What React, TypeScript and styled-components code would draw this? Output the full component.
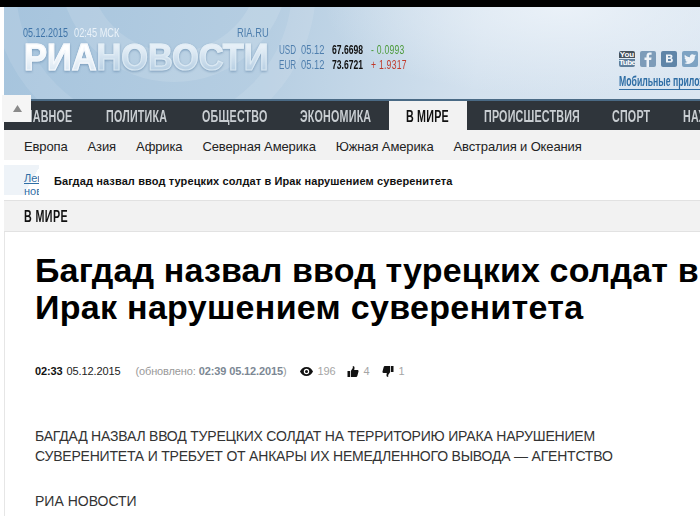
import React from 'react';
import styled, { createGlobalStyle } from 'styled-components';

const GlobalStyle = createGlobalStyle`
  html, body {
    margin: 0;
    padding: 0;
    background: #fff;
    overflow: hidden;
  }
  #root {
    width: 700px;
    height: 516px;
    overflow: hidden;
  }
`;

const arial = `"Liberation Sans", Arial, sans-serif`;

const Page = styled.div`
  position: relative;
  width: 700px;
  height: 516px;
  overflow: hidden;
  background: #fff;
  font-family: ${arial};
`;

const TopBar = styled.div`
  height: 7px;
  background: #000;
`;

const Body = styled.div`
  margin-left: 4px;
  width: 696px;
  overflow: hidden;
`;

const Header = styled.header`
  position: relative;
  height: 92px;
  overflow: hidden;
  background:
    radial-gradient(ellipse 240px 90px at 560px 0, #eaf1f8 0%, rgba(234, 241, 248, 0) 100%),
    linear-gradient(100deg, #a6c4dd 0%, #b6cee2 38%, #d3e1ee 68%, #dbe6f1 100%);
`;

const Swirl = styled.svg`
  position: absolute;
  left: 0;
  top: 0;
`;

/* no condensed face is installed, so narrow text is squeezed horizontally */
const Narrow = styled.span<{ $x?: number }>`
  display: inline-block;
  white-space: nowrap;
  transform: scaleX(${({ $x }) => $x ?? 0.66});
  transform-origin: left center;
`;

const DateLine = styled.div`
  position: absolute;
  left: 19px;
  top: 18px;
  display: flex;
  gap: 6px;
  font: 13px/15px ${arial};
`;

const DatePart = styled.span`
  width: 45px;
  color: #3f74a8;
`;

const TimePart = styled.span`
  color: #eaf2f9;
`;

const RiaLabel = styled.div`
  position: absolute;
  left: 233px;
  top: 18px;
  font: 13px/15px ${arial};
  color: #4f7fae;
`;

const Logo = styled.div`
  position: absolute;
  left: 20px;
  top: 38px;
  font: bold 36px/26px ${arial};
  white-space: nowrap;
  transform-origin: left top;
  transform: scaleX(0.955);
  filter: drop-shadow(0 1px 1px rgba(70, 110, 150, 0.5));
`;

const LogoBright = styled.span`
  background: linear-gradient(#ffffff 30%, #dbe8f3 80%);
  -webkit-background-clip: text;
  background-clip: text;
  color: transparent;
  -webkit-text-stroke: 1.2px #f4f8fc;
`;

const LogoFaded = styled.span`
  background: linear-gradient(#e6eff7 25%, #b4cde2 85%);
  -webkit-background-clip: text;
  background-clip: text;
  color: transparent;
  -webkit-text-stroke: 1.2px rgba(226, 237, 246, 0.75);
`;

const Rates = styled.div`
  position: absolute;
  left: 275px;
  top: 36px;
  display: grid;
  grid-template-columns: 22px 31px 39px auto;
  row-gap: 1px;
  font: 13px/14px ${arial};
  color: #4f7fae;
`;

const RateValue = styled.span`
  color: #111;
  font-weight: bold;
`;

const RateDelta = styled.span<{ $up?: boolean }>`
  color: ${({ $up }) => ($up ? '#c0392b' : '#4c9a3a')};
  letter-spacing: 0.4px;
`;

const Social = styled.div`
  position: absolute;
  left: 615px;
  top: 44px;
  display: flex;
  gap: 5px;
`;

const SocialIcon = styled.div<{ $tone: string }>`
  width: 16px;
  height: 16px;
  border-radius: 2px;
  background: ${({ $tone }) => $tone};
  display: flex;
  align-items: center;
  justify-content: center;
  overflow: hidden;
`;

const YouTubeBadge = styled.div`
  width: 16px;
  height: 16px;
  display: flex;
  flex-direction: column;
  gap: 1px;
  overflow: hidden;
`;

const YouPart = styled.div`
  height: 7px;
  font: bold 8px/7px ${arial};
  text-align: center;
  color: #fff;
  background: #46525c;
  border-radius: 2px 2px 0 0;
`;

const TubePart = styled.div`
  height: 8px;
  font: bold 8px/8px ${arial};
  text-align: center;
  color: #fff;
  background: #5f7f9c;
  border-radius: 0 0 2px 2px;
  letter-spacing: -0.5px;
`;

const MobileLink = styled.a`
  position: absolute;
  left: 615px;
  top: 67px;
  font: bold 14px/15px ${arial};
  color: #2f6ea5;
  border-bottom: 1px solid #2f6ea5;
  width: 120px;
`;

const MainNav = styled.nav`
  display: flex;
  height: 29px;
  background: #2f353b;
  border-top: 2px solid #4a6a85;
  overflow: hidden;
`;

const NavItem = styled.a<{ $active?: boolean; $width: number }>`
  flex: none;
  width: ${({ $width }) => $width}px;
  height: 29px;
  box-sizing: border-box;
  padding-left: 17px;
  font: bold 16px/31px ${arial};
  letter-spacing: 0.3px;
  color: ${({ $active }) => ($active ? '#111' : '#c9ced2')};
  background: ${({ $active }) => ($active ? '#f2f2f2' : 'transparent')};

  &:first-child {
    padding-left: 15px;
  }
`;

const SubNav = styled.div`
  display: flex;
  gap: 20px;
  height: 30px;
  padding-left: 20px;
  background: #f2f2f2;
  font: 13px/33px ${arial};
  letter-spacing: -0.13px;
  color: #222;
`;

const Ticker = styled.div`
  display: flex;
  align-items: flex-start;
  height: 30px;
  margin-top: 5px;
`;

const TickerTab = styled.div`
  width: 35px;
  height: 30px;
  overflow: hidden;
  padding: 7px 0 0 20px;
  box-sizing: border-box;
  background: linear-gradient(120deg, #eef3f8 0 70%, #fff 70%);
  font: 11px/13px ${arial};
  color: #2f6ea5;
  text-decoration: underline;
`;

const TickerText = styled.div`
  margin-left: 15px;
  font: bold 11px/32px ${arial};
  letter-spacing: 0.12px;
  color: #111;
  white-space: nowrap;
`;

const Section = styled.div`
  height: 32px;
  margin-top: 5px;
  box-sizing: border-box;
  padding-left: 20px;
  background: #f2f2f2;
  border-top: 1px solid #e2e2e2;
  border-bottom: 1px solid #e2e2e2;
  font: bold 16px/31px ${arial};
  letter-spacing: 0.6px;
  color: #111;
`;

const Article = styled.article`
  box-sizing: border-box;
  border-left: 1px solid #e6e6e6;
  padding: 20px 0 0 30px;
  height: 300px;
`;

const Title = styled.h1`
  margin: 0;
  font: bold 34px/37px ${arial};
  color: #000;
  white-space: nowrap;
`;

const TitleLine = styled.span<{ $spacing: number }>`
  display: block;
  letter-spacing: ${({ $spacing }) => $spacing}px;
`;

const Meta = styled.div`
  display: flex;
  align-items: center;
  margin-top: 37px;
  height: 16px;
  font: 11px/16px ${arial};
  letter-spacing: -0.12px;
  color: #222;
  white-space: nowrap;
`;

const MetaTime = styled.b`
  color: #111;
  margin-right: 4px;
`;

const Updated = styled.span`
  margin-left: 15px;
  color: #999;
`;

const UpdatedBold = styled.b`
  color: #7c8894;
`;

const Stat = styled.span<{ $gap: number }>`
  display: inline-flex;
  align-items: center;
  margin-left: ${({ $gap }) => $gap}px;
  color: #a5a5a5;
  gap: 5px;
`;

const Lead = styled.p`
  margin: 47px 0 0;
  width: 640px;
  font: 14px/20px ${arial};
  letter-spacing: -0.2px;
  color: #333;
`;

const Source = styled.p`
  margin: 25px 0 0;
  font: 14px/20px ${arial};
  color: #333;
`;

const ScrollTop = styled.button`
  position: absolute;
  left: 2px;
  top: 95px;
  width: 29px;
  height: 27px;
  padding: 0 0 0 1px;
  border: 0;
  background: #f5f5f5;
  display: flex;
  align-items: center;
  justify-content: center;
`;

const navItems = [
  { label: 'ГЛАВНОЕ', width: 85 },
  { label: 'ПОЛИТИКА', width: 96 },
  { label: 'ОБЩЕСТВО', width: 98 },
  { label: 'ЭКОНОМИКА', width: 106 },
  { label: 'В МИРЕ', width: 78, active: true },
  { label: 'ПРОИСШЕСТВИЯ', width: 128 },
  { label: 'СПОРТ', width: 71 },
  { label: 'НАУКА', width: 70 },
];
const regions = ['Европа', 'Азия', 'Африка', 'Северная Америка', 'Южная Америка', 'Австралия и Океания'];

export default function App() {
  return (
    <Page>
      <GlobalStyle />
      <TopBar />
      <Body>
        <Header>
          <Swirl width="696" height="92" viewBox="0 0 696 92">
            <circle cx="170" cy="-40" r="100" fill="none" stroke="#fff" strokeOpacity="0.12" strokeWidth="30" />
            <circle cx="150" cy="-20" r="150" fill="none" stroke="#fff" strokeOpacity="0.1" strokeWidth="24" />
          </Swirl>
          <DateLine>
            <DatePart>
              <Narrow $x={0.69}>05.12.2015</Narrow>
            </DatePart>
            <TimePart>
              <Narrow $x={0.71}>02:45 МСК</Narrow>
            </TimePart>
          </DateLine>
          <RiaLabel>
            <Narrow $x={0.72}>RIA.RU</Narrow>
          </RiaLabel>
          <Logo>
            <LogoBright>РИА</LogoBright>
            <LogoFaded>НОВОСТИ</LogoFaded>
          </Logo>
          <Rates>
            <Narrow $x={0.62}>USD</Narrow>
            <Narrow $x={0.72}>05.12</Narrow>
            <RateValue>
              <Narrow>67.6698</Narrow>
            </RateValue>
            <RateDelta>
              <Narrow>- 0.0993</Narrow>
            </RateDelta>
            <Narrow $x={0.62}>EUR</Narrow>
            <Narrow $x={0.72}>05.12</Narrow>
            <RateValue>
              <Narrow>73.6721</Narrow>
            </RateValue>
            <RateDelta $up>
              <Narrow>+ 1.9317</Narrow>
            </RateDelta>
          </Rates>
          <Social>
            <YouTubeBadge>
              <YouPart>You</YouPart>
              <TubePart>Tube</TubePart>
            </YouTubeBadge>
            <SocialIcon $tone="#7d9cb9">
              <svg width="16" height="16" viewBox="0 0 16 16">
                <path d="M9 16V9h2.2l.4-2.6H9V5c0-.8.3-1.2 1.2-1.2h1.4V1.600C11.200 1.500 10.500 1.500 9.800 1.500 7.800 1.500 6.500 2.700 6.500 4.800v1.600H4.500V9h2v7z" fill="#eef3f8" />
              </svg>
            </SocialIcon>
            <SocialIcon $tone="#5f85a8">
              <svg width="16" height="16" viewBox="0 0 16 16">
                <path d="M5 3.500h4.200c1.500 0 2.300.8 2.300 2 0 .8-.4 1.400-1.100 1.700.9.300 1.500 1 1.500 2 0 1.500-1.100 2.300-2.700 2.300H5zm2 1.600v1.500h1.800c.5 0 .8-.3.8-.8s-.3-.7-.8-.7zm0 3v2h2c.6 0 1-.4 1-1s-.4-1-1-1z" fill="#eef3f8" />
              </svg>
            </SocialIcon>
            <SocialIcon $tone="#7ea3c3">
              <svg width="16" height="16" viewBox="0 0 24 24">
                <path d="M21 6.500c-.7.300-1.400.5-2.100.6.800-.5 1.300-1.200 1.600-2-.7.400-1.500.7-2.300.9a3.700 3.700 0 0 0-6.300 3.400C8.800 9.200 6.100 7.800 4.300 5.500c-1 1.700-.5 3.800 1.100 4.900-.6 0-1.200-.2-1.700-.5 0 1.800 1.300 3.300 3 3.700-.5.100-1.100.2-1.700.1.500 1.500 1.900 2.500 3.500 2.600A7.500 7.500 0 0 1 3 17.800 10.500 10.500 0 0 0 19.200 8.400c.7-.5 1.300-1.200 1.800-1.900z" fill="#eef3f8" />
              </svg>
            </SocialIcon>
          </Social>
          <MobileLink>
            <Narrow $x={0.62}>Мобильные приложения</Narrow>
          </MobileLink>
        </Header>
        <MainNav>
          {navItems.map((item) => (
            <NavItem key={item.label} $active={item.active} $width={item.width}>
              <Narrow $x={0.67}>{item.label}</Narrow>
            </NavItem>
          ))}
        </MainNav>
        <SubNav>
          {regions.map((region) => (
            <span key={region}>{region}</span>
          ))}
        </SubNav>
        <Ticker>
          <TickerTab>Лента новостей</TickerTab>
          <TickerText>Багдад назвал ввод турецких солдат в Ирак нарушением суверенитета</TickerText>
        </Ticker>
        <Section>
          <Narrow $x={0.67}>В МИРЕ</Narrow>
        </Section>
        <Article>
          <Title>
            <TitleLine $spacing={0.15}>Багдад назвал ввод турецких солдат в</TitleLine>
            <TitleLine $spacing={0.3}>Ирак нарушением суверенитета</TitleLine>
          </Title>
          <Meta>
            <MetaTime>02:33</MetaTime>
            05.12.2015
            <Updated>
              (обновлено: <UpdatedBold>02:39 05.12.2015</UpdatedBold>)
            </Updated>
            <Stat $gap={13}>
              <svg width="13" height="9" viewBox="0 0 13 9">
                <path d="M6.500 0C3.500 0 1.200 2 0 4.500 1.200 7 3.500 9 6.500 9S11.800 7 13 4.500C11.800 2 9.500 0 6.500 0zm0 7.200a2.700 2.700 0 1 1 0-5.400 2.700 2.700 0 0 1 0 5.400zm0-4.200a1.500 1.500 0 1 0 0 3 1.500 1.500 0 0 0 0-3z" fill="#111" />
              </svg>
              196
            </Stat>
            <Stat $gap={11}>
              <svg width="12" height="11" viewBox="0 0 11 11">
                <path d="M0 5h2.500v6H0zM3.300 5l2-3V0c1.200 0 1.900.8 1.700 2.200L6.700 4H10c.8 0 1.200.7 1 1.400L9.800 10c-.2.600-.6 1-1.200 1H3.300z" fill="#111" />
              </svg>
              4
            </Stat>
            <Stat $gap={12}>
              <svg width="12" height="11" viewBox="0 0 11 11">
                <path d="M11 6H8.500V0H11zM7.700 6l-2 3v2c-1.200 0-1.900-.8-1.700-2.200L4.300 7H1C.2 7-.2 6.300 0 5.600L1.200 1C1.400.4 1.800 0 2.400 0h5.300z" fill="#111" />
              </svg>
              1
            </Stat>
          </Meta>
          <Lead>
            БАГДАД НАЗВАЛ ВВОД ТУРЕЦКИХ СОЛДАТ НА ТЕРРИТОРИЮ ИРАКА НАРУШЕНИЕМ СУВЕРЕНИТЕТА И ТРЕБУЕТ ОТ АНКАРЫ ИХ
            НЕМЕДЛЕННОГО ВЫВОДА — АГЕНТСТВО
          </Lead>
          <Source>РИА НОВОСТИ</Source>
        </Article>
      </Body>
      <ScrollTop>
        <svg width="9" height="7" viewBox="0 0 9 7">
          <path d="M4.500 0L9 7H0z" fill="#8a8a8a" />
        </svg>
      </ScrollTop>
    </Page>
  );
}
